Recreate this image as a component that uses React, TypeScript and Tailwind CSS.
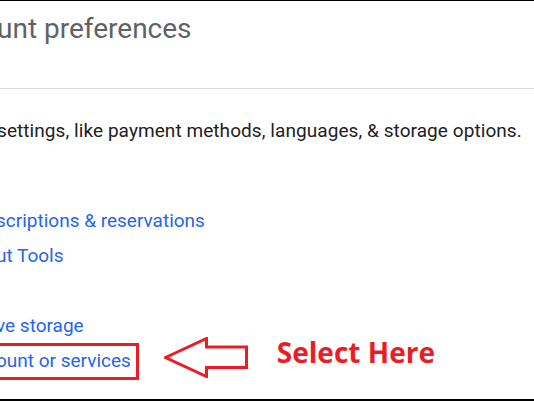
const linkClass = 'block ml-[-4px] leading-[24px] text-[19px] text-[#2864ec] whitespace-nowrap';

function LeftArrow() {
  return (
    <svg width="85" height="41" viewBox="0 0 85 41" className="mt-[-6px] ml-[25px] shrink-0">
      <path
        d="M1.5 20.5 L42.5 1.5 L42.5 10 L82.5 10 L82.5 30.5 L42.5 30.5 L42.5 39.5 Z"
        fill="none"
        stroke="#ed1c24"
        strokeWidth="3"
      />
    </svg>
  );
}

export default function App() {
  return (
    <div className="w-[534px] h-[401px] bg-white border-t border-b-2 border-black overflow-hidden flex flex-col font-['Roboto',sans-serif]">
      <div className="h-[88px] border-b border-[#dadce0] pt-[10px]">
        <h1 className="ml-[-3px] text-[28px] leading-[36px] text-[#5f6368] whitespace-nowrap">
          unt preferences
        </h1>
      </div>

      <p className="mt-[30px] ml-[-3px] text-[19px] leading-[24px] tracking-[0.07px] text-[#202124] whitespace-nowrap">
        settings, like payment methods, languages, &amp; storage options.
      </p>

      <div className="mt-[66px] flex flex-col gap-[11px]">
        <a className={linkClass}>scriptions &amp; reservations</a>
        <a className={linkClass}>ut Tools</a>
      </div>

      <div className="mt-[46px] flex flex-col gap-[11px]">
        <a className={linkClass}>ve storage</a>
        <div className="flex items-start mt-[-6px]">
          <a className="block ml-[-4px] leading-[24px] text-[19px] text-[#2864ec] border-[3px] border-l-0 border-[#ed1c24] pt-[3px] pb-[4px] pr-[5px] whitespace-nowrap">
            ount or services
          </a>
          <LeftArrow />
          <span className="ml-[28px] mt-[-5px] text-[28px] leading-[28px] font-bold text-[#ed1c24] font-['Open_Sans',sans-serif] whitespace-nowrap">
            Select Here
          </span>
        </div>
      </div>
    </div>
  );
}
